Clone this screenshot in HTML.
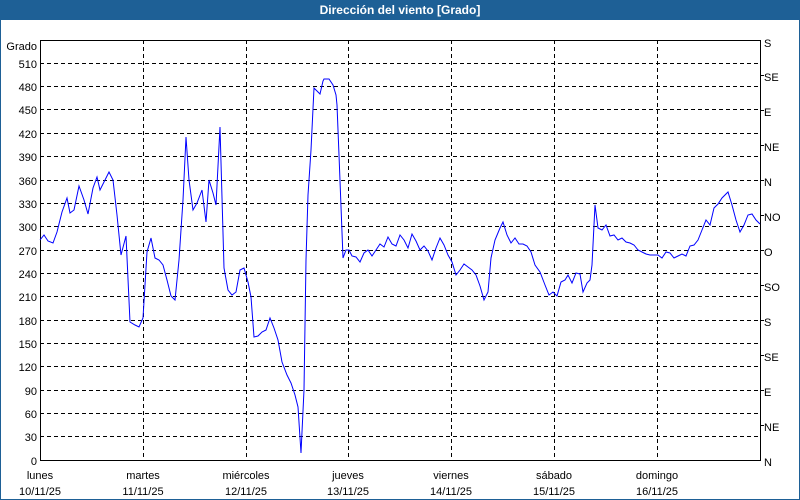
<!DOCTYPE html>
<html><head><meta charset="utf-8"><style>
html,body{margin:0;padding:0;width:800px;height:500px;overflow:hidden;background:#fff;font-family:"Liberation Sans",sans-serif}
</style></head><body>
<svg width="800" height="500" xmlns="http://www.w3.org/2000/svg" font-family="Liberation Sans, sans-serif" font-size="11">
<rect x="0" y="0" width="800" height="500" fill="#fff"/>
<rect x="0.5" y="0.5" width="799" height="499" fill="none" stroke="#1e6096" stroke-width="1"/>
<rect x="0" y="0" width="800" height="20" fill="#1e6096"/>
<text x="400" y="14" fill="#fff" font-weight="bold" font-size="12" text-anchor="middle">Dirección del viento [Grado]</text>
<g stroke="#000" stroke-dasharray="4,3" stroke-width="1">
<line x1="40" x2="760" y1="63.5" y2="63.5"/><line x1="40" x2="760" y1="86.5" y2="86.5"/><line x1="40" x2="760" y1="109.5" y2="109.5"/><line x1="40" x2="760" y1="133.5" y2="133.5"/><line x1="40" x2="760" y1="156.5" y2="156.5"/><line x1="40" x2="760" y1="180.5" y2="180.5"/><line x1="40" x2="760" y1="203.5" y2="203.5"/><line x1="40" x2="760" y1="226.5" y2="226.5"/><line x1="40" x2="760" y1="250.5" y2="250.5"/><line x1="40" x2="760" y1="273.5" y2="273.5"/><line x1="40" x2="760" y1="296.5" y2="296.5"/><line x1="40" x2="760" y1="320.5" y2="320.5"/><line x1="40" x2="760" y1="343.5" y2="343.5"/><line x1="40" x2="760" y1="366.5" y2="366.5"/><line x1="40" x2="760" y1="390.5" y2="390.5"/><line x1="40" x2="760" y1="413.5" y2="413.5"/><line x1="40" x2="760" y1="436.5" y2="436.5"/>
<line x1="143.5" x2="143.5" y1="40" y2="460"/><line x1="246.5" x2="246.5" y1="40" y2="460"/><line x1="348.5" x2="348.5" y1="40" y2="460"/><line x1="451.5" x2="451.5" y1="40" y2="460"/><line x1="554.5" x2="554.5" y1="40" y2="460"/><line x1="657.5" x2="657.5" y1="40" y2="460"/>
</g>
<path d="M40.5 40.5H760.5V460.5H40.5Z" fill="none" stroke="#000"/>
<g stroke="#000"><line x1="760" x2="764" y1="75.5" y2="75.5"/><line x1="760" x2="764" y1="110.5" y2="110.5"/><line x1="760" x2="764" y1="145.5" y2="145.5"/><line x1="760" x2="764" y1="180.5" y2="180.5"/><line x1="760" x2="764" y1="215.5" y2="215.5"/><line x1="760" x2="764" y1="250.5" y2="250.5"/><line x1="760" x2="764" y1="285.5" y2="285.5"/><line x1="760" x2="764" y1="320.5" y2="320.5"/><line x1="760" x2="764" y1="355.5" y2="355.5"/><line x1="760" x2="764" y1="390.5" y2="390.5"/><line x1="760" x2="764" y1="425.5" y2="425.5"/></g>
<g text-anchor="end" fill="#000">
<text x="37" y="50">Grado</text>
<text x="37" y="68">510</text><text x="37" y="91">480</text><text x="37" y="114">450</text><text x="37" y="138">420</text><text x="37" y="161">390</text><text x="37" y="185">360</text><text x="37" y="208">330</text><text x="37" y="231">300</text><text x="37" y="255">270</text><text x="37" y="278">240</text><text x="37" y="301">210</text><text x="37" y="325">180</text><text x="37" y="348">150</text><text x="37" y="371">120</text><text x="37" y="395">90</text><text x="37" y="418">60</text><text x="37" y="441">30</text><text x="37" y="465">0</text>
</g>
<g fill="#000">
<text x="764" y="47">S</text><text x="764" y="81">SE</text><text x="764" y="116">E</text><text x="764" y="151">NE</text><text x="764" y="186">N</text><text x="764" y="221">NO</text><text x="764" y="256">O</text><text x="764" y="291">SO</text><text x="764" y="326">S</text><text x="764" y="361">SE</text><text x="764" y="396">E</text><text x="764" y="431">NE</text><text x="764" y="466">N</text>
</g>
<g text-anchor="middle" fill="#000">
<text x="40" y="479">lunes</text><text x="40" y="495">10/11/25</text>
<text x="143" y="479">martes</text><text x="143" y="495">11/11/25</text>
<text x="246" y="479">miércoles</text><text x="246" y="495">12/11/25</text>
<text x="348" y="479">jueves</text><text x="348" y="495">13/11/25</text>
<text x="451" y="479">viernes</text><text x="451" y="495">14/11/25</text>
<text x="554" y="479">sábado</text><text x="554" y="495">15/11/25</text>
<text x="657" y="479">domingo</text><text x="657" y="495">16/11/25</text>
</g>
<polyline fill="none" stroke="#0000ff" stroke-width="1" points="40,240 44,235 48,241 53,243 57,232 62,212 67,198 70,213 74,210 79,186 84,200 88,214 93,188 97,177 100,190 104,182 109,172 113,180 117,215 121,255 126,236 130,322 135,325 139,327 143,318 147,252 151,238 155,258 159,260 163,265 167,280 171,296 175,300 179,260 183,200 186,137 189,180 193,210 197,203 202,190 206,222 209,180 213,193 216,205 220,127 224,268 228,290 232,295 236,292 240,270 244,268 248,282 251,297 254,337 258,336 262,332 266,330 270,318 274,328 278,340 282,362 287,375 291,383 295,395 298,407 301,453 304,390 306,260 308,195 311,150 314,88 318,92 320,94 323,81 324,79 329,79 333,85 336,95 337,105 339,155 343,258 346,250 349,250 352,256 356,257 360,262 364,253 368,250 372,256 376,250 380,244 384,247 388,237 392,244 396,246 400,235 404,240 408,248 412,234 416,241 420,250 424,246 428,251 432,260 436,248 440,238 444,245 448,255 452,262 456,275 460,270 464,264 468,267 472,270 476,275 480,286 484,300 488,292 491,258 495,240 500,228 503,222 507,235 511,243 515,238 519,244 523,244 527,246 531,252 535,265 540,272 545,285 549,295 553,292 557,296 561,282 565,280 568,275 572,283 576,273 580,274 583,292 587,283 590,280 592,265 595,205 598,228 602,230 606,225 610,236 614,235 618,240 622,238 626,242 630,243 634,245 638,250 642,252 646,254 650,255 654,255 658,255 662,258 666,252 670,253 674,258 678,256 682,254 686,256 690,246 694,245 698,240 702,230 706,220 710,225 714,208 718,204 722,198 728,192 732,205 736,220 740,232 744,225 748,215 752,214 756,220 760,224"/>
</svg>
</body></html>
